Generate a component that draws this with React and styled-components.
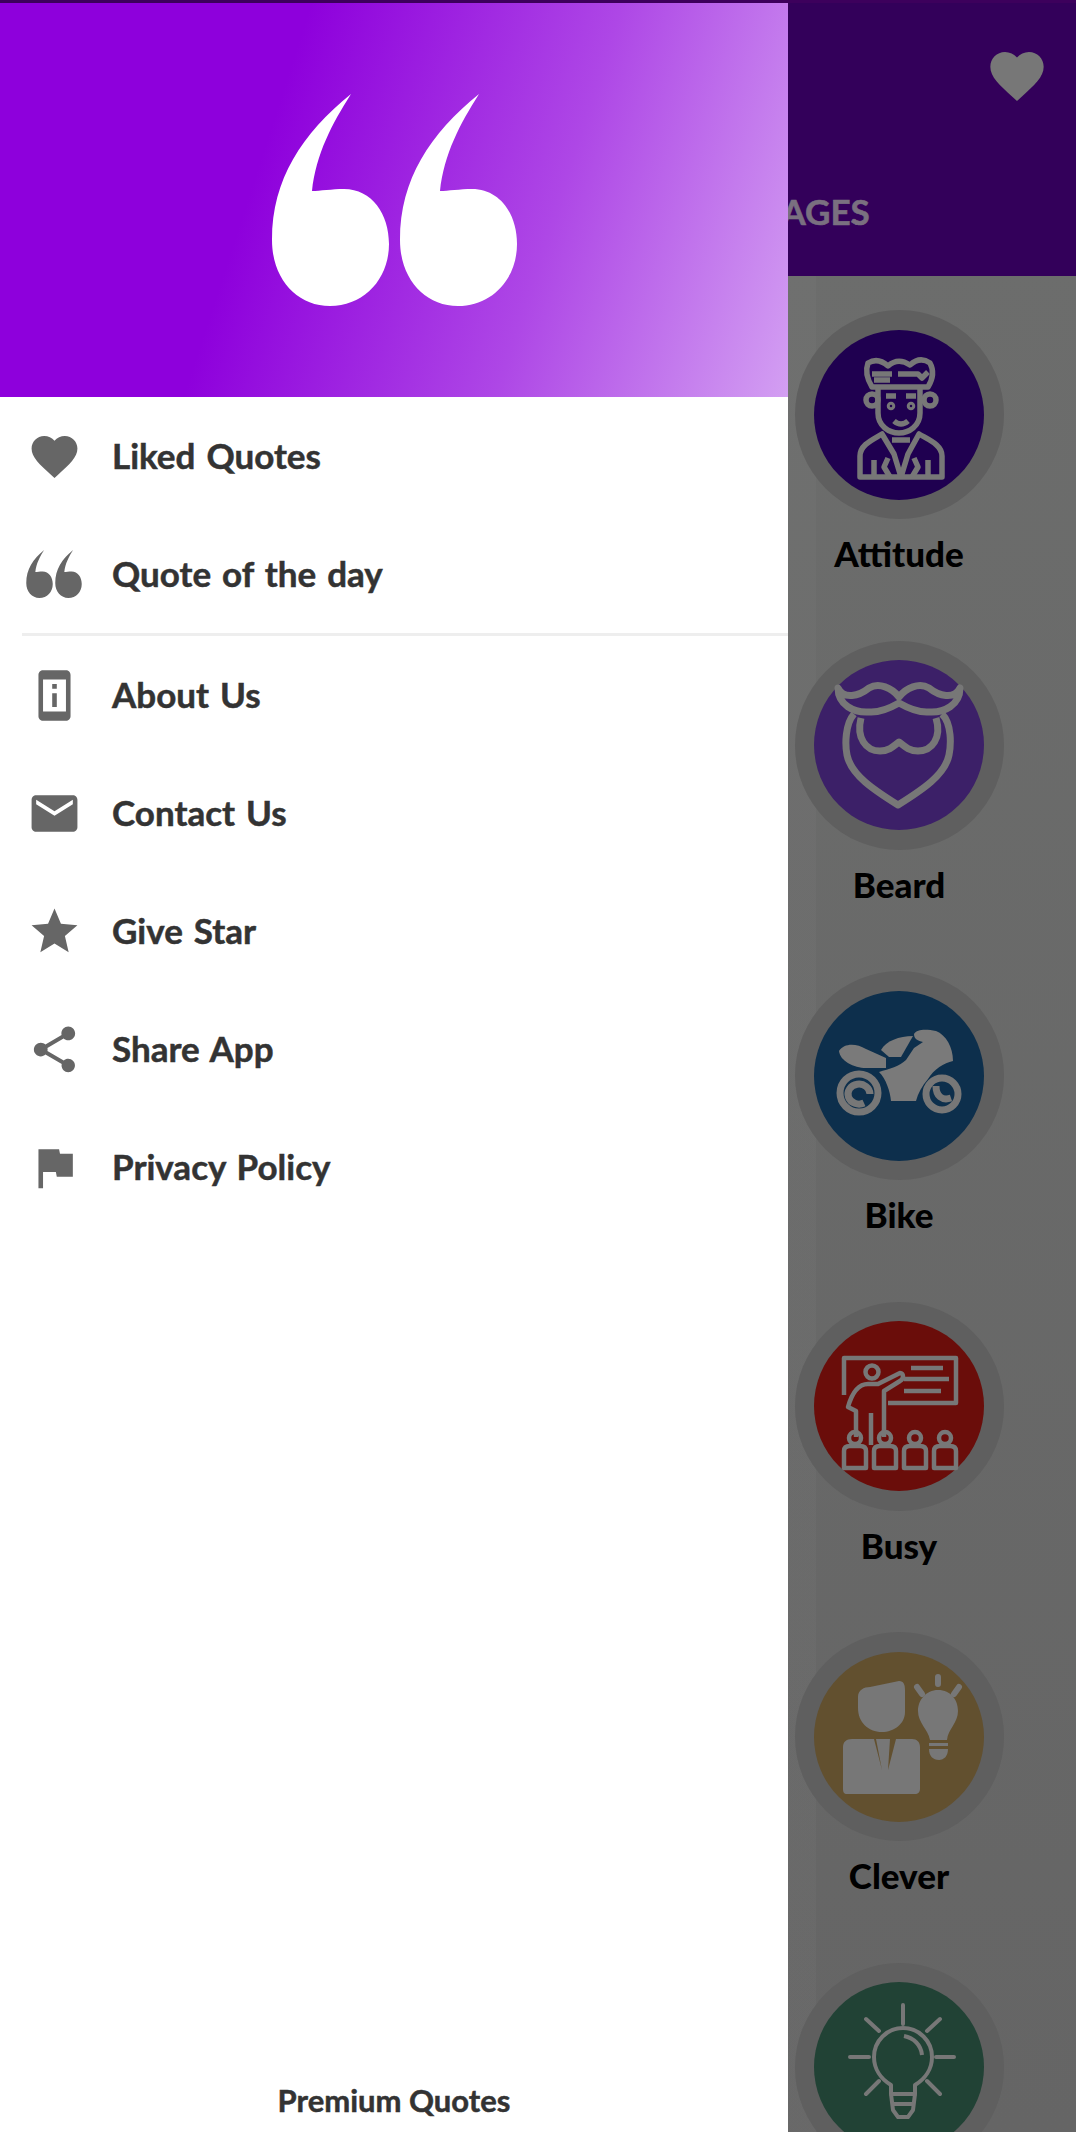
import React from 'react';
import styled, { createGlobalStyle } from 'styled-components';

const GlobalStyle = createGlobalStyle`
  html, body {
    margin: 0;
    padding: 0;
    background: #fff;
  }
  * {
    box-sizing: border-box;
  }
`;

const MENU_TOP = [
  { label: 'Liked Quotes', path: 'M12 21.35l-1.45-1.32C5.4 15.36 2 12.28 2 8.5 2 5.42 4.42 3 7.5 3c1.74 0 3.41.81 4.5 2.09C13.09 3.81 14.76 3 16.5 3 19.58 3 22 5.42 22 8.5c0 3.78-3.4 6.86-8.55 11.54L12 21.35z' },
  { label: 'Quote of the day', quote: true },
];

const MENU_BOTTOM = [
  { label: 'About Us', path: 'M13 7h-2v2h2V7zm0 4h-2v6h2v-6zm4-9.99L7 1c-1.1 0-2 .9-2 2v18c0 1.1.9 2 2 2h10c1.1 0 2-.9 2-2V3c0-1.1-.9-1.99-2-1.99zM17 19H7V5h10v14z' },
  { label: 'Contact Us', path: 'M20 4H4c-1.1 0-1.99.9-1.99 2L2 18c0 1.1.9 2 2 2h16c1.1 0 2-.9 2-2V6c0-1.1-.9-2-2-2zm0 4l-8 5-8-5V6l8 5 8-5v2z' },
  { label: 'Give Star', path: 'M12 17.27L18.18 21l-1.64-7.03L22 9.24l-7.19-.61L12 2 9.19 8.63 2 9.24l5.46 4.73L5.82 21z' },
  { label: 'Share App', path: 'M18 16.08c-.76 0-1.44.3-1.96.77L8.91 12.7c.05-.23.09-.46.09-.7s-.04-.47-.09-.7l7.05-4.11c.54.5 1.25.81 2.04.81 1.66 0 3-1.34 3-3s-1.34-3-3-3-3 1.34-3 3c0 .24.04.47.09.7L8.04 9.81C7.5 9.31 6.79 9 6 9c-1.66 0-3 1.34-3 3s1.34 3 3 3c.79 0 1.5-.31 2.04-.81l7.12 4.16c-.05.21-.08.43-.08.65 0 1.61 1.31 2.92 2.92 2.92 1.61 0 2.92-1.31 2.92-2.92s-1.31-2.92-2.92-2.92z' },
  { label: 'Privacy Policy', path: 'M14.4 6L14 4H5v17h2v-7h5.6l.4 2h7V6z' },
];

const QUOTE_MARK = 'M79 0C30 40 0 85 0 146C0 185 25 212 58 212C92 212 117 185 117 150C117 120 100 95 72 95C60 95 48 97 40 97C44 60 60 30 79 0Z';

const QuoteGlyph = ({ width, height }) => (
  <svg width={width} height={height} viewBox="0 0 245 212" fill="currentColor">
    <path d={QUOTE_MARK} />
    <path d={QUOTE_MARK} transform="translate(128 0)" />
  </svg>
);

const AttitudeIcon = () => (
  <CategorySvg viewBox="0 0 170 170" $weight={5.5}>
    <path d="M54 33Q64 27 74 36Q84 27 96 35Q106 26 116 33Q122 44 114 57H58Q50 44 54 33Z" />
    <path d="M58 44H78M84 44H104L108 48L114 42M60 50H76" />
    <path d="M64 58V83C64 96 75 103 85 103C95 103 106 96 106 83V58" />
    <circle cx="58" cy="70" r="6" />
    <circle cx="116" cy="70" r="6" />
    <path d="M72 66H82M92 66H102" />
    <path d="M80 91Q87 97 94 91" />
    <circle cx="77" cy="76" r="1.5" />
    <circle cx="97" cy="76" r="1.5" />
    <path d="M46 147V126C46 115 58 110 68 104L80 124L87 147L94 124L105 104C115 110 128 115 128 126V147Z" />
    <path d="M60 147V130M114 147V130M74 128L70 137L76 147M100 128L104 137L98 147M78 110H96" />
  </CategorySvg>
);

const BeardIcon = () => (
  <CategorySvg viewBox="0 0 170 170" $weight={7}>
    <path d="M24 28C30 40 45 36 55 28C65 22 78 28 85 37C92 28 105 22 115 28C125 36 140 40 146 28C146 45 130 53 115 52C103 53 92 47 85 43C78 47 67 53 55 52C40 53 24 45 24 28Z" />
    <path d="M40 54C31 64 31 85 33 95C37 115 60 130 84 145C108 130 131 115 135 95C137 85 138 64 128 54" />
    <path d="M47 58C42 78 52 91 66 91C75 91 80 86 85 82C90 86 95 91 104 91C118 91 128 78 122 58" />
  </CategorySvg>
);

const BikeIcon = () => (
  <CategorySvg viewBox="0 0 170 170" $weight={7}>
    <g fill="#7a7a7a" stroke="none">
      <path d="M25 60C30 52 42 52 52 58L72 67V77H52C40 77 26 70 25 60Z" />
      <path d="M67 59C72 50 85 45 99 45L87 66H75Z" />
      <path d="M100 43C103 38 112 38 122 40C132 44 139 56 139 70C130 72 120 78 114 88C108 95 104 102 102 110H77C76 100 72 88 65 81C75 78 86 75 92 69L100 57L109 51C104 50 100 48 100 43Z" />
    </g>
    <circle cx="45" cy="102" r="19" />
    <path d="M56 103A11 10 0 1 0 50 112" />
    <circle cx="128" cy="103" r="16" />
    <path d="M122 95C122 105 128 110 137 107" />
  </CategorySvg>
);

const BusyIcon = () => (
  <CategorySvg viewBox="0 0 170 170" $weight={4.5}>
    <path d="M30 74V37H142V82H74" />
    <path d="M97 47H129M90 58H135M90 70H127" />
    <circle cx="58" cy="51" r="6.5" />
    <path d="M42 116V90L34 86C38 72 44 63 54 63H64L86 52C90 52 90 58 86 60L70 70V116M57 92V124" />
    <circle cx="41" cy="117" r="6" />
    <circle cx="71" cy="117" r="6" />
    <circle cx="101" cy="117" r="6" />
    <circle cx="131" cy="117" r="6" />
    <path d="M30 147V130Q30 125 36 125H46Q52 125 52 130V147ZM60 147V130Q60 125 66 125H76Q82 125 82 130V147ZM90 147V130Q90 125 96 125H106Q112 125 112 130V147ZM120 147V130Q120 125 126 125H136Q142 125 142 130V147Z" />
  </CategorySvg>
);

const CleverIcon = () => (
  <CategorySvg viewBox="0 0 170 170" $weight={6}>
    <g fill="#777" stroke="none">
      <path d="M44 45C44 38 50 35 56 35L85 29C90 29 91 33 91 38V60C91 72 80 80 68 80C54 80 44 70 44 56Z" />
      <path d="M38 87H60L68 118L62 87H76L74 118L82 87H98C103 87 106 90 106 95V137C106 140 104 142 101 142H33C30 142 29 140 29 137V95C29 90 32 87 38 87Z" />
      <path d="M124 38C137 38 144 48 144 59C144 71 134 77 133 88H116C114 77 104 71 104 59C104 48 112 38 124 38Z" />
      <path d="M115 91H134V94H115ZM115 97H134C134 104 130 108 125 108C119 108 115 104 115 97Z" />
    </g>
    <path d="M124 25V32M103 35L108 42M145 35L140 42" strokeLinecap="round" />
  </CategorySvg>
);

const BulbIcon = () => (
  <CategorySvg viewBox="0 0 170 170" $weight={4}>
    <path d="M89 23V42M36 75H55M122 75H140M52 37L65 49M126 37L113 49M52 112L65 99M126 112L113 99" strokeLinecap="round" />
    <path d="M77 112V103C67 97 60 87 60 75C60 59 73 46 89 46C105 46 118 59 118 75C118 87 111 97 101 103V112Z" />
    <path d="M90 54C100 56 107 63 108 73" />
    <path d="M77 112L79 128L84 135H94L99 128L101 112M78 122H100" />
  </CategorySvg>
);

const CATEGORIES = [
  { label: 'Attitude', color: '#1f0050', Icon: AttitudeIcon },
  { label: 'Beard', color: '#3c2068', Icon: BeardIcon },
  { label: 'Bike', color: '#0d2f4c', Icon: BikeIcon },
  { label: 'Busy', color: '#6a0d0a', Icon: BusyIcon },
  { label: 'Clever', color: '#62502f', Icon: CleverIcon },
  { label: '', color: '#214235', Icon: BulbIcon },
];

const App = () => (
  <Page>
    <GlobalStyle />
    <StatusStrip />
    <Columns>
      <Drawer>
        <DrawerHeader>
          <QuoteGlyph width={245} height={212} />
        </DrawerHeader>
        {MENU_TOP.map((item) => (
          <MenuRow key={item.label} item={item} />
        ))}
        <Divider />
        {MENU_BOTTOM.map((item) => (
          <MenuRow key={item.label} item={item} />
        ))}
        <Footer>Premium Quotes</Footer>
      </Drawer>
      <Behind>
        <AppBar>
          <HeartButton viewBox="0 0 24 24">
            <path d={MENU_TOP[0].path} />
          </HeartButton>
          <TabLabel>IMAGES</TabLabel>
        </AppBar>
        <CategoryList>
          {CATEGORIES.map(({ label, color, Icon }) => (
            <CategoryCell key={color}>
              <Ring>
                <Disc $color={color}>
                  <Icon />
                </Disc>
              </Ring>
              {label && <CategoryLabel>{label}</CategoryLabel>}
            </CategoryCell>
          ))}
        </CategoryList>
      </Behind>
    </Columns>
  </Page>
);

const MenuRow = ({ item }) => (
  <Row>
    <IconSlot>
      {item.quote ? (
        <QuoteGlyph width={56} height={48} />
      ) : (
        <svg width="55" height="55" viewBox="0 0 24 24" fill="currentColor">
          <path d={item.path} />
        </svg>
      )}
    </IconSlot>
    <RowLabel>{item.label}</RowLabel>
  </Row>
);

const Page = styled.div`
  width: 1076px;
  height: 2132px;
  overflow: hidden;
  display: flex;
  flex-direction: column;
  font-family: 'Lato', 'Noto Sans', sans-serif;
  font-weight: 700;
`;

const StatusStrip = styled.div`
  height: 3px;
  flex: none;
  background: #3d005c;
`;

const Columns = styled.div`
  flex: 1;
  display: flex;
  min-height: 0;
`;

const Drawer = styled.aside`
  width: 788px;
  flex: none;
  display: flex;
  flex-direction: column;
  background: #fff;
`;

const DrawerHeader = styled.div`
  height: 394px;
  flex: none;
  display: flex;
  align-items: flex-start;
  justify-content: center;
  padding-top: 91px;
  color: #fff;
  background: linear-gradient(108deg, #8e00dc 34%, #ae47e6 68%, #d39ff2 100%);
`;

const Row = styled.div`
  height: 118px;
  flex: none;
  display: flex;
  align-items: center;
  padding-left: 26px;
`;

const IconSlot = styled.div`
  width: 56px;
  height: 56px;
  flex: none;
  display: flex;
  align-items: center;
  justify-content: center;
  color: #666;
`;

const RowLabel = styled.span`
  margin-left: 30px;
  padding-bottom: 3px;
  font-size: 35px;
  line-height: 44px;
  word-spacing: 2.5px;
  color: #333;
  -webkit-text-stroke: 0.5px #333;
`;

const Divider = styled.div`
  height: 3px;
  flex: none;
  margin-left: 22px;
  background: #eee;
`;

const Footer = styled.div`
  margin-top: auto;
  padding-bottom: 13px;
  text-align: center;
  font-size: 31px;
  line-height: 38px;
  color: #333;
  -webkit-text-stroke: 0.5px #333;
`;

const Behind = styled.main`
  flex: 1;
  min-width: 0;
  overflow: hidden;
  display: flex;
  flex-direction: column;
  background:
    linear-gradient(90deg, rgba(255, 255, 255, 0.025) 28px, transparent 28px),
    linear-gradient(180deg, #6d6e6d, #656565);
`;

const AppBar = styled.header`
  height: 273px;
  flex: none;
  display: flex;
  flex-direction: column;
  background: #33005a;
`;

const HeartButton = styled.svg`
  width: 64px;
  height: 64px;
  flex: none;
  margin: 41px 0 0 197px;
  fill: #777;
`;

const TabLabel = styled.span`
  margin: 81px 0 0 -50px;
  font-size: 35px;
  line-height: 44px;
  color: #7a7080;
  -webkit-text-stroke: 0.6px #7a7080;
`;

const CategoryList = styled.div`
  width: 222px;
  display: grid;
  grid-auto-rows: 330.5px;
  padding-top: 34px;
`;

const CategoryCell = styled.div`
  display: flex;
  flex-direction: column;
  align-items: center;
`;

const Ring = styled.div`
  width: 209px;
  height: 209px;
  flex: none;
  display: flex;
  align-items: center;
  justify-content: center;
  border-radius: 50%;
  background: #5f5f5f;
`;

const Disc = styled.div`
  width: 170px;
  height: 170px;
  border-radius: 50%;
  background: ${(props) => props.$color};
`;

const CategorySvg = styled.svg`
  display: block;
  width: 170px;
  height: 170px;
  fill: none;
  stroke: #777;
  stroke-width: ${(props) => props.$weight};
  stroke-linejoin: round;
`;

const CategoryLabel = styled.div`
  margin-top: 14px;
  font-size: 35px;
  font-weight: 900;
  line-height: 40px;
  color: #000;
`;

export default App;
